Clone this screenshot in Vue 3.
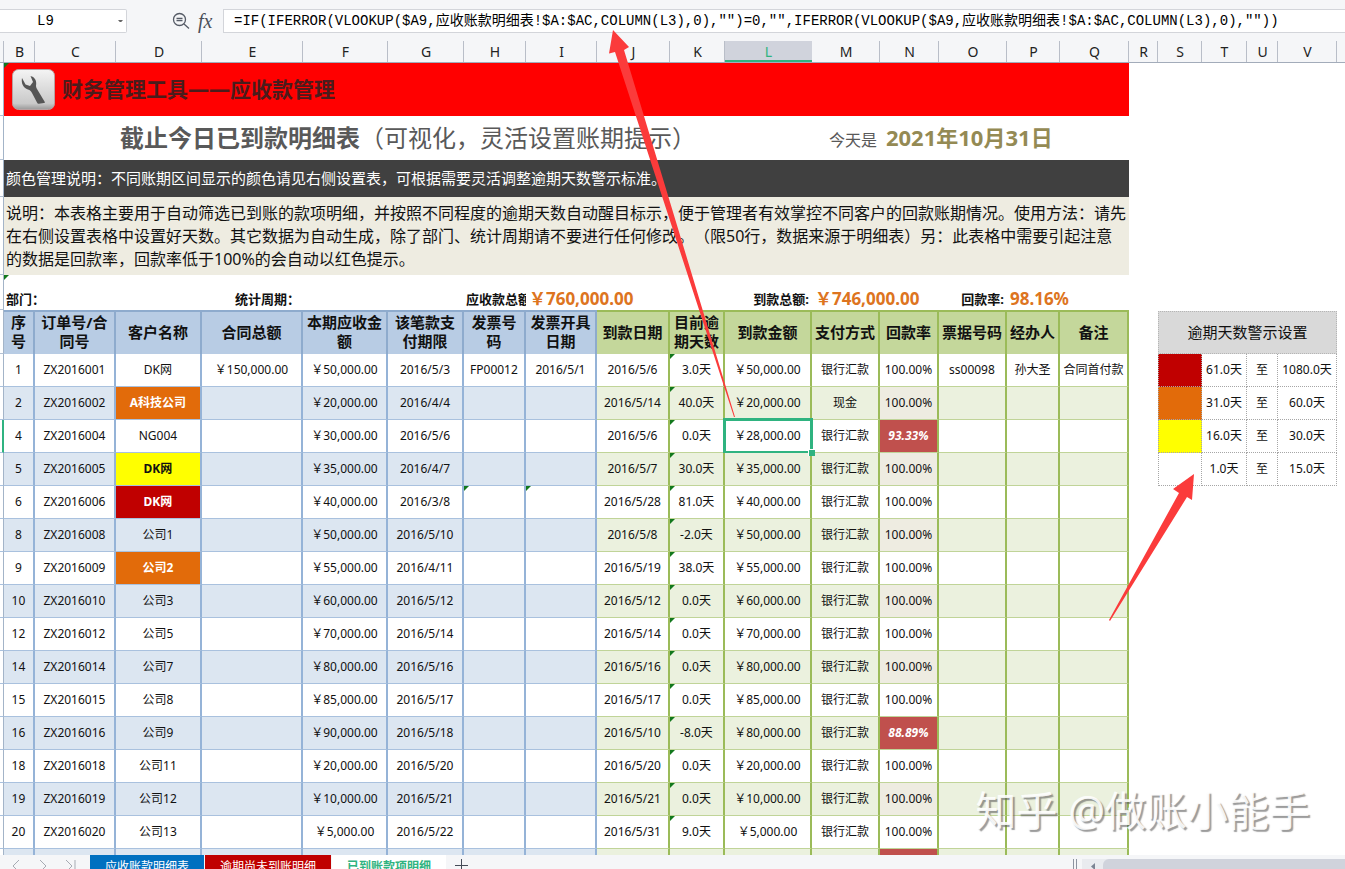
<script setup>
import { ref } from 'vue'

const nameBox = ref('L9')
const formula = ref('=IF(IFERROR(VLOOKUP($A9,应收账款明细表!$A:$AC,COLUMN(L3),0),"")=0,"",IFERROR(VLOOKUP($A9,应收账款明细表!$A:$AC,COLUMN(L3),0),""))')

const letters = [
  ['', 4], ['B', 31], ['C', 81], ['D', 86], ['E', 101], ['F', 85], ['G', 76], ['H', 62], ['I', 71],
  ['J', 73], ['K', 55], ['L', 87], ['M', 68], ['N', 59], ['O', 68], ['P', 53], ['Q', 69],
  ['R', 29], ['S', 44], ['T', 45], ['U', 31], ['V', 59], ['', 8],
].map(([name, size]) => ({ name, size }))

const mainCols = letters.slice(0, 17)
const mainTotal = mainCols.reduce((sum, c) => sum + c.size, 0)
const sideCols = letters.slice(18, 22)
const sideTotal = sideCols.reduce((sum, c) => sum + c.size, 0)

const heads = ['序号', '订单号/合同号', '客户名称', '合同总额', '本期应收金额', '该笔款支付期限', '发票号码', '发票开具日期',
  '到款日期', '目前逾期天数', '到款金额', '支付方式', '回款率', '票据号码', '经办人', '备注']

const bank = '银行汇款'
const source = [
  ['1', '001', 'DK网', '50,000', '5/3', '5/6', '3.0', '50,000', bank, '100.00%'],
  ['2', '002', 'A科技公司', '20,000', '4/4', '5/14', '40.0', '20,000', '现金', '100.00%', 'orange'],
  ['4', '004', 'NG004', '30,000', '5/6', '5/6', '0.0', '28,000', bank, '93.33%'],
  ['5', '005', 'DK网', '35,000', '4/7', '5/7', '30.0', '35,000', bank, '100.00%', 'yellow'],
  ['6', '006', 'DK网', '40,000', '3/8', '5/28', '81.0', '40,000', bank, '100.00%', 'crimson'],
  ['8', '008', '公司1', '50,000', '5/10', '5/8', '-2.0', '50,000', bank, '100.00%'],
  ['9', '009', '公司2', '55,000', '4/11', '5/19', '38.0', '55,000', bank, '100.00%', 'orange'],
  ['10', '010', '公司3', '60,000', '5/12', '5/12', '0.0', '60,000', bank, '100.00%'],
  ['12', '012', '公司5', '70,000', '5/14', '5/14', '0.0', '70,000', bank, '100.00%'],
  ['14', '014', '公司7', '80,000', '5/16', '5/16', '0.0', '80,000', bank, '100.00%'],
  ['15', '015', '公司8', '85,000', '5/17', '5/17', '0.0', '85,000', bank, '100.00%'],
  ['16', '016', '公司9', '90,000', '5/18', '5/10', '-8.0', '80,000', bank, '88.89%'],
  ['18', '018', '公司11', '20,000', '5/20', '5/20', '0.0', '20,000', bank, '100.00%'],
  ['19', '019', '公司12', '10,000', '5/21', '5/21', '0.0', '10,000', bank, '100.00%'],
  ['20', '020', '公司13', '5,000', '5/22', '5/31', '9.0', '5,000', bank, '100.00%'],
]

const rows = source.map((r, i) => {
  const first = i === 0
  const texts = [
    r[0], 'ZX2016' + r[1], r[2], first ? '¥150,000.00' : '', '¥' + r[3] + '.00', '2016/' + r[4],
    first ? 'FP00012' : '', first ? '2016/5/1' : '', '2016/' + r[5], r[6] + '天', '¥' + r[7] + '.00',
    r[8], r[9], first ? 'ss00098' : '', first ? '孙大圣' : '', first ? '合同首付款' : '',
  ].map(t => t.replace('¥', '\uFFE5'))
  return {
    id: r[0],
    current: r[0] === '4',
    cells: texts.map((text, c) => ({
      text,
      classes: {
        green: c > 7,
        rate: c === 12,
        low: c === 12 && text !== '100.00%',
        marked: c === 9 || (r[0] === '6' && (c === 6 || c === 7)),
        selected: c === 10 && r[0] === '4',
        [r[10] || 'plain']: c === 2,
      },
    })),
  }
})

const levels = [
  { color: 'crimson', from: '61.0天', to: '1080.0天' },
  { color: 'orange', from: '31.0天', to: '60.0天' },
  { color: 'yellow', from: '16.0天', to: '30.0天' },
  { color: 'plain', from: '1.0天', to: '15.0天' },
]
</script>

<template>
  <div class="app">
    <header class="formula-bar">
      <div class="name-box">
        <input v-model="nameBox" aria-label="名称框" />
        <button type="button" aria-label="展开名称"><svg viewBox="0 0 7 4"><path d="M0 0h7L3.500 4z" fill="#666" /></svg></button>
      </div>
      <div class="tools">
        <button type="button" aria-label="缩小">
          <svg viewBox="0 0 18 18" fill="none" stroke="#555b66" stroke-width="1.300">
            <circle cx="7.500" cy="7.500" r="6" /><path d="M12 12l5 4.500M4.500 6.500h6M4.500 8.700h6" />
          </svg>
        </button>
        <button type="button" class="fx" aria-label="插入函数">fx</button>
      </div>
      <input v-model="formula" class="formula" aria-label="编辑栏" spellcheck="false" />
    </header>

    <div class="letters">
      <div
        v-for="(c, i) in letters" :key="i" class="letter" :class="{ active: c.name === 'L' }"
        :style="{ flexGrow: c.size }"
      >{{ c.name }}</div>
    </div>

    <main class="sheet">
      <div class="main-area">
        <table class="ledger">
          <colgroup>
            <col v-for="(c, i) in mainCols" :key="i" :style="{ width: (c.size / mainTotal) * 100 + '%' }" />
          </colgroup>
          <tbody>
            <tr>
              <td class="gutter"></td>
              <td colspan="16" class="banner marked">
                <div class="banner-inner">
                  <svg class="logo" viewBox="0 0 44 42">
                    <defs>
                      <linearGradient id="plate" x1="0" y1="0" x2="0" y2="1">
                        <stop offset="0" stop-color="#f4f4f4" /><stop offset="0.850" stop-color="#c9c9c9" /><stop offset="1" stop-color="#999" />
                      </linearGradient>
                    </defs>
                    <rect x="0.500" y="0.500" width="42" height="40" rx="6" fill="url(#plate)" stroke="#b9a0a0" />
                    <path
                      d="M10 9C9 14 11 19 16 20.500c2 .5 3 1.500 4 3.500l5 9.500c.5 1 1 1.300 2 1.200l5-.7c1 0 1-.6.5-1.500L25 20c-1-2-1.200-3-.8-5C24.500 11 22.500 8 18.500 7l2.500 6-3 4-4.500-1.500z"
                      fill="#555"
                    />
                  </svg>
                  <h1>财务管理工具——应收款管理</h1>
                </div>
              </td>
            </tr>
            <tr>
              <td class="gutter"></td>
              <td colspan="11" class="title"><strong>截止今日已到款明细表</strong>（可视化，灵活设置账期提示）</td>
              <td colspan="5" class="today"><span>今天是</span><strong>2021年10月31日</strong></td>
            </tr>
            <tr>
              <td class="gutter"></td>
              <td colspan="16" class="color-note">颜色管理说明：不同账期区间显示的颜色请见右侧设置表，可根据需要灵活调整逾期天数警示标准。</td>
            </tr>
            <tr>
              <td class="gutter"></td>
              <td colspan="16" class="note">说明：本表格主要用于自动筛选已到账的款项明细，并按照不同程度的逾期天数自动醒目标示，便于管理者有效掌控不同客户的回款账期情况。使用方法：请先在右侧设置表格中设置好天数。其它数据为自动生成，除了部门、统计周期请不要进行任何修改。（限50行，数据来源于明细表）另：此表格中需要引起注意<br />的数据是回款率，回款率低于100%的会自动以红色提示。</td>
            </tr>
            <tr class="totals">
              <td class="gutter"></td>
              <td colspan="2" class="marked">部门：</td>
              <td></td>
              <td class="right">统计周期：</td>
              <td colspan="2"></td>
              <td class="clip">应收款总额</td>
              <td colspan="2" class="amount">￥760,000.00</td>
              <td></td>
              <td class="right">到款总额:</td>
              <td colspan="2" class="amount">￥746,000.00</td>
              <td class="right">回款率:</td>
              <td colspan="2" class="amount">98.16%</td>
            </tr>
            <tr class="heads">
              <td class="gutter"></td>
              <th v-for="(h, i) in heads" :key="h" scope="col" :class="{ green: i > 7 }">{{ h }}</th>
            </tr>
            <tr v-for="(row, i) in rows" :key="row.id" class="data" :class="{ odd: i % 2 === 1 }">
              <td class="gutter" :class="{ current: row.current }"></td>
              <td v-for="(cell, c) in row.cells" :key="c" :class="cell.classes">{{ cell.text }}</td>
            </tr>
            <tr class="data odd">
              <td class="gutter"></td>
              <td v-for="n in 16" :key="n" :class="{ green: n > 8, low: n === 13 }"></td>
            </tr>
          </tbody>
        </table>
      </div>

      <aside class="side-area">
        <table class="settings">
          <colgroup>
            <col v-for="c in sideCols" :key="c.name" :style="{ width: (c.size / sideTotal) * 100 + '%' }" />
          </colgroup>
          <thead>
            <tr><th colspan="4">逾期天数警示设置</th></tr>
          </thead>
          <tbody>
            <tr v-for="l in levels" :key="l.from">
              <td :class="l.color"></td>
              <td>{{ l.from }}</td>
              <td>至</td>
              <td>{{ l.to }}</td>
            </tr>
          </tbody>
        </table>
      </aside>
      <div class="tail"></div>
    </main>

    <footer class="tab-bar">
      <div class="nav">
        <button v-for="d in ['M8 1L2 7l6 6', 'M2 1l6 6-6 6', 'M1 1l6 6-6 6M10 1v12']" :key="d" type="button" aria-label="切换工作表">
          <svg viewBox="0 0 11 14" fill="none" stroke="#a7abb3"><path :d="d" /></svg>
        </button>
      </div>
      <button type="button" class="tab blue">应收账款明细表</button>
      <button type="button" class="tab red">逾期尚未到账明细</button>
      <button type="button" class="tab open">已到账款项明细</button>
      <button type="button" class="add" aria-label="新建工作表">
        <svg viewBox="0 0 13 13" stroke="#454b57"><path d="M6.500 0v13M0 6.500h13" /></svg>
      </button>
      <div class="scroll">
        <span class="grip"></span>
        <div class="track">
          <svg viewBox="0 0 5 7"><path d="M4 0v7L0 3.500z" fill="#7c8494" /></svg>
          <span class="thumb"></span>
        </div>
      </div>
    </footer>

    <svg class="arrows" viewBox="0 0 1345 869" preserveAspectRatio="none" fill="#fb3b3b">
      <path d="M613 30L629 47 624 50 735 417 734 417 615 52 609 53.500z" />
      <path d="M1194 474L1192 500 1187 497 1110 621 1109 620 1179 493 1173 489z" />
    </svg>
    <div class="watermark">知乎 @做账小能手</div>
  </div>
</template>

<style>
body {
  margin: 0;
  overflow: hidden;
}
</style>

<style scoped>
.app {
  position: relative;
  display: flex;
  flex-direction: column;
  height: 100vh;
  overflow: hidden;
  background: #fff;
  color: #111;
  font-family: "Noto Sans", "Noto Sans CJK SC", sans-serif;
  font-size: 12px;
  text-spacing-trim: space-all;
}
.app * {
  box-sizing: border-box;
}
button {
  border: 0;
  padding: 0;
  background: none;
  color: inherit;
  font: inherit;
}
svg {
  display: block;
}

.formula-bar {
  display: flex;
  flex: none;
  align-items: flex-start;
  height: 41px;
  padding-top: 9px;
  background: #f5f6f8;
}
.name-box {
  display: flex;
  align-items: center;
  width: 127px;
  height: 24px;
  border: 1px solid #d3d5da;
  border-left: 0;
  border-radius: 0 2px 2px 0;
  background: #fff;
}
.name-box input,
.formula {
  min-width: 0;
  border: 0;
  outline: 0;
  background: #fff;
  color: #000;
  font: 14px "Liberation Mono", "Noto Sans CJK SC", monospace;
}
.name-box input {
  flex: 1;
  padding: 0 0 0 37px;
}
.name-box button {
  width: 8px;
}
.name-box svg {
  width: 5px;
}
.tools {
  display: flex;
  align-items: center;
  width: 96px;
  height: 24px;
  padding-left: 45px;
  gap: 8px;
}
.tools svg {
  width: 18px;
}
.fx {
  color: #4b505a;
  font: italic 20px "Liberation Serif", serif;
}
.formula {
  flex: 1;
  height: 24px;
  padding: 0 10px 4px;
  border: 1px solid #d3d5da;
  border-right: 0;
}

.letters {
  display: flex;
  flex: none;
  height: 22px;
  background: #f5f6f8;
  border-bottom: 1px solid #a3acba;
}
.letter {
  flex: 0 1 0;
  box-shadow: inset -1px 0 #b9bec8;
  color: #222;
  font-size: 14px;
  line-height: 21px;
  text-align: center;
}
.letter:last-child {
  box-shadow: none;
}
.letter.active {
  background: #d0d3dc;
  box-shadow: inset 0 -2px #2fb380;
  color: #2fb380;
}

.sheet {
  display: flex;
  flex: 1;
  align-items: flex-start;
  min-height: 0;
  overflow: hidden;
}
.main-area {
  flex: 1129 1 0;
  min-width: 0;
}
.side-area {
  flex: 179 1 0;
  min-width: 0;
  margin-left: 29px;
  padding-top: 248px;
}
.tail {
  flex: 8 1 0;
}
table {
  width: 100%;
  table-layout: fixed;
  border-collapse: separate;
  border-spacing: 0;
}
td,
th {
  position: relative;
  padding: 0;
}
.gutter {
  border-right: 1px solid #a3b4c8;
  border-bottom: 1px solid #b4c2d4;
}
.gutter.current {
  background: #ddf0e8;
  border-right: 2px solid #2fb380;
}
.marked::before {
  content: "";
  position: absolute;
  top: 0;
  left: 0;
  border-top: 5px solid #12781c;
  border-right: 5px solid transparent;
}

.banner {
  height: 53px;
  background: #f00;
}
.banner-inner {
  display: flex;
  align-items: center;
  gap: 6px;
  padding-left: 8px;
}
.logo {
  width: 44px;
  height: 42px;
}
h1 {
  margin: 0;
  padding-bottom: 2px;
  color: #4a1c1c;
  font-size: 21px;
  line-height: 30px;
}
.title,
.today {
  height: 44px;
  color: #595959;
  white-space: nowrap;
}
.title {
  padding-left: 116px;
  font-size: 24px;
  line-height: 32px;
}
.today {
  padding-left: 17px;
  font-size: 16px;
  line-height: 32px;
}
.today strong {
  margin-left: 9px;
  color: #948a54;
  font-size: 22px;
}
.color-note {
  height: 37px;
  padding: 0 0 2px 2px;
  background: #404040;
  color: #fff;
  font-size: 15px;
}
.note {
  height: 78px;
  padding-left: 2px;
  background: #eeece1;
  font-size: 16px;
  line-height: 23px;
}
.totals td {
  height: 35px;
  padding: 12px 0 0 2px;
  font-size: 13px;
  font-weight: bold;
  line-height: 22px;
  white-space: nowrap;
}
.totals .gutter {
  padding: 0;
}
.totals .right {
  padding-right: 3px;
  text-align: right;
}
.totals .clip {
  overflow: hidden;
}
.totals .amount {
  padding-left: 3px;
  color: #dd7420;
  font-size: 17px;
}

.heads th {
  height: 44px;
  padding: 0 2px 2px;
  border-top: 2px solid #8eabcd;
  border-right: 2px solid #8eabcd;
  background: #b8cce4;
  font-size: 15px;
  line-height: 19px;
}
.heads th.green {
  border-color: #9bbb59;
  background: #c4d79b;
}
.data td {
  height: 33px;
  padding-bottom: 2px;
  border-right: 2px solid #95b3d7;
  border-bottom: 1px solid #a9c1de;
  text-align: center;
  white-space: nowrap;
}
.data td.green {
  border-right-color: #9bbb59;
  border-bottom-color: #c0d498;
}
.data.odd td {
  background: #dce6f1;
}
.data.odd td.green {
  background: #ebf1de;
}
.data.odd td.rate {
  background: #eeece1;
}
.data td.gutter,
.data.odd td.gutter {
  border-right: 1px solid #a3b4c8;
  background: #fff;
}
.data td.gutter.current {
  border-right: 2px solid #2fb380;
}
.data td.low,
.data.odd td.low {
  background: #c0504d;
  color: #fff;
  font-style: italic;
  font-weight: bold;
}
.data td.orange,
.settings .orange {
  background: #e26b0a;
  color: #fff;
  font-weight: bold;
}
.data td.yellow,
.settings .yellow {
  background: #ff0;
  font-weight: bold;
}
.data td.crimson,
.settings .crimson {
  background: #c00000;
  color: #fff;
  font-weight: bold;
}
.selected::before {
  content: "";
  position: absolute;
  inset: -2px -3px -2px -2px;
  border: 3px solid #2fb380;
}
.selected::after {
  content: "";
  position: absolute;
  right: -5px;
  bottom: -4px;
  z-index: 1;
  width: 6px;
  height: 6px;
  border: 1px solid #fff;
  border-width: 1px 0 0 1px;
  background: #2fb380;
}

.settings th {
  height: 43px;
  padding-bottom: 2px;
  border: 1px dotted #b5b5b5;
  background: #d9d9d9;
  font-size: 15px;
  font-weight: normal;
}
.settings td {
  height: 33px;
  padding-bottom: 2px;
  border-right: 1px dotted #a6a6a6;
  border-bottom: 1px dotted #a6a6a6;
  text-align: center;
  white-space: nowrap;
}
.settings td:first-child {
  border-left: 1px dotted #a6a6a6;
}

.tab-bar {
  display: flex;
  flex: none;
  align-items: flex-start;
  height: 14px;
  overflow: hidden;
  background: #f5f6f8;
}
.nav {
  display: flex;
  width: 90px;
  gap: 16px;
  padding: 4px 0 0 11px;
}
.nav svg {
  width: 11px;
}
.tab {
  height: 24px;
  margin-right: 1px;
  padding: 0 15px;
  color: #fff;
  line-height: 24px;
}
.tab.blue {
  background: #0070c0;
}
.tab.red {
  background: #c00000;
}
.tab.open {
  background: #fff;
  color: #2fb380;
  font-weight: bold;
}
.add {
  padding: 4px 8px;
}
.add svg {
  width: 13px;
}
.scroll {
  display: flex;
  width: 272px;
  margin-left: auto;
  gap: 5px;
  padding-top: 4px;
}
.grip {
  width: 4px;
  height: 20px;
  border: 1px solid #8d94a1;
  border-width: 0 1px;
}
.track {
  display: flex;
  flex: 1;
  gap: 7px;
  height: 20px;
  padding-left: 9px;
  background: #e9ebef;
}
.track svg {
  width: 5px;
  height: 7px;
  margin-top: 4px;
}
.thumb {
  flex: 1;
  border-radius: 6px 0 0 6px;
  background: #d0d3dc;
}

.arrows {
  position: absolute;
  inset: 0;
  width: 100%;
  height: 100%;
  pointer-events: none;
}
.watermark {
  position: absolute;
  right: 35px;
  bottom: 30px;
  color: rgba(255, 255, 255, 0.9);
  font-size: 41px;
  line-height: 58px;
  text-shadow: 2px 2px 1px rgba(90, 90, 90, 0.6);
  pointer-events: none;
}
</style>
